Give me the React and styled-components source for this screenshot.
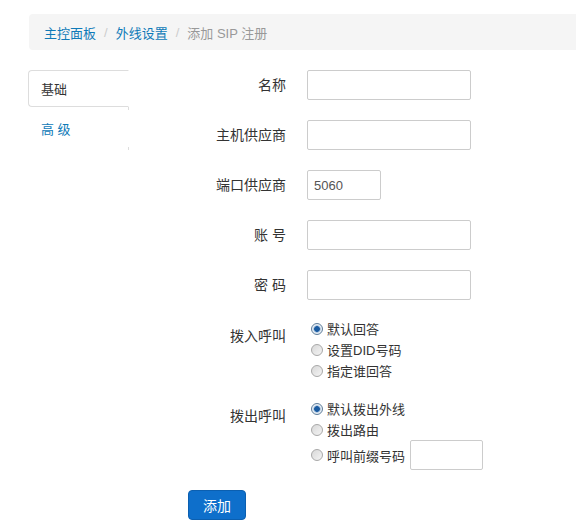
import React from 'react';
import styled, { createGlobalStyle } from 'styled-components';

const GlobalStyle = createGlobalStyle`
    body {
        margin: 0;
        background: #fff;
        font-family: "Liberation Sans", "Noto Sans CJK SC", sans-serif;
        font-size: 13px;
        color: #333;
    }
`;

const App = () => {
    return (
        <>
            <GlobalStyle />
            <Page>
                <Breadcrumb>
                    <Crumb href="#">主控面板</Crumb>
                    <Sep>/</Sep>
                    <Crumb href="#">外线设置</Crumb>
                    <Sep>/</Sep>
                    <Current>添加 SIP 注册</Current>
                </Breadcrumb>
                <Main>
                    <SideTabs>
                        <Tab active>基础</Tab>
                        <Tab>高 级</Tab>
                    </SideTabs>
                    <Form>
                        <Row>
                            <Label>名称</Label>
                            <Input />
                        </Row>
                        <Row>
                            <Label>主机供应商</Label>
                            <Input />
                        </Row>
                        <Row>
                            <Label>端口供应商</Label>
                            <Input short defaultValue="5060" />
                        </Row>
                        <Row>
                            <Label>账 号</Label>
                            <Input />
                        </Row>
                        <Row>
                            <Label>密 码</Label>
                            <Input type="password" />
                        </Row>
                        <RadioRow offset={-2}>
                            <Label top>拨入呼叫</Label>
                            <Options>
                                <Option><Radio checked />默认回答</Option>
                                <Option><Radio />设置DID号码</Option>
                                <Option><Radio />指定谁回答</Option>
                            </Options>
                        </RadioRow>
                        <RadioRow offset={-1}>
                            <Label top>拨出呼叫</Label>
                            <Options>
                                <Option><Radio checked />默认拨出外线</Option>
                                <Option><Radio />拨出路由</Option>
                                <Option><Radio />呼叫前缀号码<PrefixInput /></Option>
                            </Options>
                        </RadioRow>
                        <Actions>
                            <Button>添加</Button>
                        </Actions>
                    </Form>
                </Main>
            </Page>
        </>
    );
};

export default App;

const Page = styled.div`
    padding: 14px 0 0 28px;
`;

const Breadcrumb = styled.div`
    display: flex;
    align-items: center;
    height: 36px;
    padding-left: 15px;
    background: #f5f5f5;
    border-radius: 4px 0 0 4px;
    margin-left: 1px;
`;

const Crumb = styled.a`
    color: #0f7ab8;
    text-decoration: none;
`;

const Sep = styled.span`
    color: #ccc;
    padding: 0 8px;
`;

const Current = styled.span`
    color: #999;
`;

const Main = styled.div`
    display: flex;
    margin-top: 20px;
`;

const SideTabs = styled.div`
    width: 100px;
    height: 80px;
    border-right: 1px solid #ddd;
    flex-shrink: 0;
`;

const Tab = styled.div`
    height: 37px;
    box-sizing: border-box;
    padding-left: 12px;
    display: flex;
    align-items: center;
    margin-right: -1px;
    color: ${p => (p.active ? '#333' : '#0f7ab8')};
    background: #fff;
    border: 1px solid ${p => (p.active ? '#ddd' : 'transparent')};
    border-right-color: ${p => (p.active ? '#fff' : 'transparent')};
    border-radius: 4px 0 0 4px;
    margin-bottom: 3px;
    font-size: 13px;
`;

const Form = styled.div`
    display: flex;
    flex-direction: column;
`;

const Row = styled.div`
    display: flex;
    align-items: center;
    margin-bottom: 20px;
`;

const RadioRow = styled.div`
    display: flex;
    align-items: flex-start;
    margin-bottom: 18px;
    margin-top: ${p => p.offset || 0}px;
`;

const Label = styled.label`
    width: 157px;
    padding-right: 21px;
    text-align: right;
    font-size: 14px;
    line-height: 20px;
    padding-top: ${p => (p.top ? '8px' : '0')};
    flex-shrink: 0;
`;

const Input = styled.input`
    box-sizing: border-box;
    width: ${p => (p.short ? '74px' : '164px')};
    height: 30px;
    border: 1px solid #ccc;
    border-radius: 2px;
    padding: 0 6px;
    font-family: "Liberation Sans", sans-serif;
    font-size: 13px;
    color: #555;
    outline: none;
`;

const Options = styled.div`
    display: flex;
    flex-direction: column;
    padding-left: 2px;
`;

const Option = styled.label`
    display: flex;
    align-items: center;
    min-height: 21px;
    font-size: 13px;
    color: #333;
    white-space: nowrap;
`;

const Radio = styled.span`
    display: inline-block;
    box-sizing: border-box;
    width: 12px;
    height: 12px;
    margin: 0 4px 0 2px;
    border-radius: 50%;
    border: 1px solid ${p => (p.checked ? '#5e7d9a' : '#a8a8a8')};
    background: ${p =>
        p.checked
            ? 'radial-gradient(circle, #1a5aa0 0 2.5px, #7ea6cf 3px, #e8eef4 4px)'
            : 'linear-gradient(135deg, #d8d8d8, #f4f4f4)'};
`;

const PrefixInput = styled.input`
    box-sizing: border-box;
    width: 73px;
    height: 30px;
    margin-left: 5px;
    border: 1px solid #ccc;
    border-radius: 2px;
    outline: none;
`;

const Actions = styled.div`
    display: flex;
    margin-top: 2px;
    padding-left: 59px;
`;

const Button = styled.button`
    width: 58px;
    height: 30px;
    background: #0e6fcb;
    color: #fff;
    border: 1px solid #0b5fb0;
    border-radius: 4px;
    font-family: "Noto Sans CJK SC", sans-serif;
    font-size: 14px;
    cursor: pointer;
`;
